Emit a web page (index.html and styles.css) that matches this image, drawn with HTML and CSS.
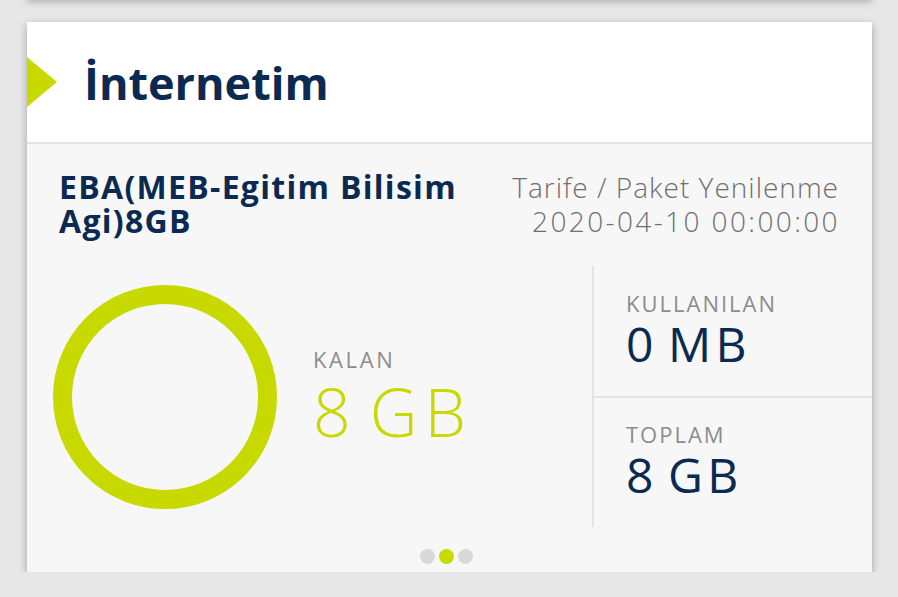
FILE: index.html
```html
<!DOCTYPE html>
<html lang="tr">
<head>
    <meta charset="UTF-8">
    <meta name="viewport" content="width=device-width, initial-scale=1.0">
    <title>İnternetim</title>
    <link rel="stylesheet" href="styles.css">
</head>
<body>

    <div class="prev-card"></div>

    <div class="card">
        <div class="card-header">
            <svg class="chevron" width="30" height="50" viewBox="0 0 30 50">
                <polygon points="0,0 30,25 0,50" fill="#c8d900"/>
            </svg>
            <h1>İnternetim</h1>
        </div>

        <div class="card-body">
            <div class="plan">
                <div class="plan-name">EBA(MEB-Egitim Bilisim<br>Agi)8GB</div>
                <div class="plan-renew">
                    <span class="renew-title">Tarife / Paket Yenilenme</span>
                    <span class="renew-date">2020-04-10 00:00:00</span>
                </div>
            </div>

            <div class="stats">
                <div class="remaining">
                    <div class="ring"></div>
                    <div class="remaining-text">
                        <div class="label">KALAN</div>
                        <div class="value green">8 GB</div>
                    </div>
                </div>
                <div class="usage">
                    <div class="usage-cell">
                        <div class="label">KULLANILAN</div>
                        <div class="value navy">0 MB</div>
                    </div>
                    <div class="usage-cell">
                        <div class="label">TOPLAM</div>
                        <div class="value navy">8 GB</div>
                    </div>
                </div>
            </div>

            <div class="dots">
                <span class="dot"></span>
                <span class="dot active"></span>
                <span class="dot"></span>
            </div>
        </div>
    </div>

</body>
</html>
```

FILE: styles.css
```css
/* temel */
body {
    margin: 0;
    padding: 0;
    background-color: #e7e7e7;
    font-family: 'Open Sans', 'Noto Sans', sans-serif;
    overflow: hidden;
}

.prev-card {
    height: 10px;
    margin: -10px 26px 0 27px;
    background-color: #f7f7f7;
    box-shadow: 0 2px 7px rgba(0, 0, 0, 0.25);
}

.card {
    margin: 22px 26px 0 27px;
    background-color: #f7f7f7;
    box-shadow: 0 3px 8px rgba(0, 0, 0, 0.3);
}

/* başlık */
.card-header {
    height: 120px;
    display: flex;
    align-items: center;
    background-color: #fff;
    border-bottom: 2px solid #e3e3e3;
}

.chevron {
    display: block;
    flex-shrink: 0;
}

.card-header h1 {
    margin: 0 0 0 27px;
    font-size: 45px;
    line-height: 45px;
    font-weight: 700;
    color: #0b2a52;
}

/* paket bilgisi */
.plan {
    display: flex;
    justify-content: space-between;
    padding: 26px 34px 0 32px;
}

.plan-name {
    font-size: 32px;
    line-height: 34px;
    font-weight: 700;
    color: #0b2a52;
    letter-spacing: 1.3px;
}

.plan-renew {
    font-size: 28px;
    line-height: 34px;
    font-weight: 300;
    color: #6f6f6f;
    text-align: right;
}

.plan-renew span {
    display: block;
}

.renew-title {
    letter-spacing: 1px;
    margin-right: -1px;
}

.renew-date {
    letter-spacing: 2.4px;
    margin-right: -2px;
}

/* kota */
.stats {
    display: flex;
    height: 261px;
    margin-top: 28px;
}

.remaining {
    flex: 1;
    display: flex;
    align-items: center;
    padding-left: 26px;
    border-right: 2px solid #e3e3e3;
}

.ring {
    width: 186px;
    height: 186px;
    border: 19px solid #c8d900;
    border-radius: 50%;
    flex-shrink: 0;
}

.remaining-text {
    margin-left: 36px;
    padding-bottom: 5px;
}

.label {
    font-size: 22px;
    line-height: 26px;
    color: #8c8c8c;
    letter-spacing: 2px;
}

.remaining-text .label {
    letter-spacing: 2.6px;
}

.remaining-text .value {
    font-size: 66px;
    line-height: 64px;
    margin-top: 7px;
    font-weight: 300;
    letter-spacing: 7px;
    word-spacing: -12px;
}

.green {
    color: #c8d900;
}

.navy {
    color: #0b2a52;
}

.usage {
    width: 278px;
    display: flex;
    flex-direction: column;
}

.usage-cell {
    flex: 1;
    padding: 24px 0 0 32px;
}

.usage-cell:first-child {
    border-bottom: 2px solid #e3e3e3;
}

.usage-cell:last-child {
    padding-top: 23px;
}

.usage-cell .value {
    font-size: 48px;
    line-height: 50px;
    margin-top: 3px;
    letter-spacing: 4.5px;
    word-spacing: -7px;
}

/* sayfa noktaları */
.dots {
    display: flex;
    justify-content: center;
    gap: 4px;
    padding: 22px 7px 8px 0;
}

.dot {
    width: 15px;
    height: 15px;
    border-radius: 50%;
    background-color: #d9d9d9;
}

.dot.active {
    background-color: #c8d900;
}
```
